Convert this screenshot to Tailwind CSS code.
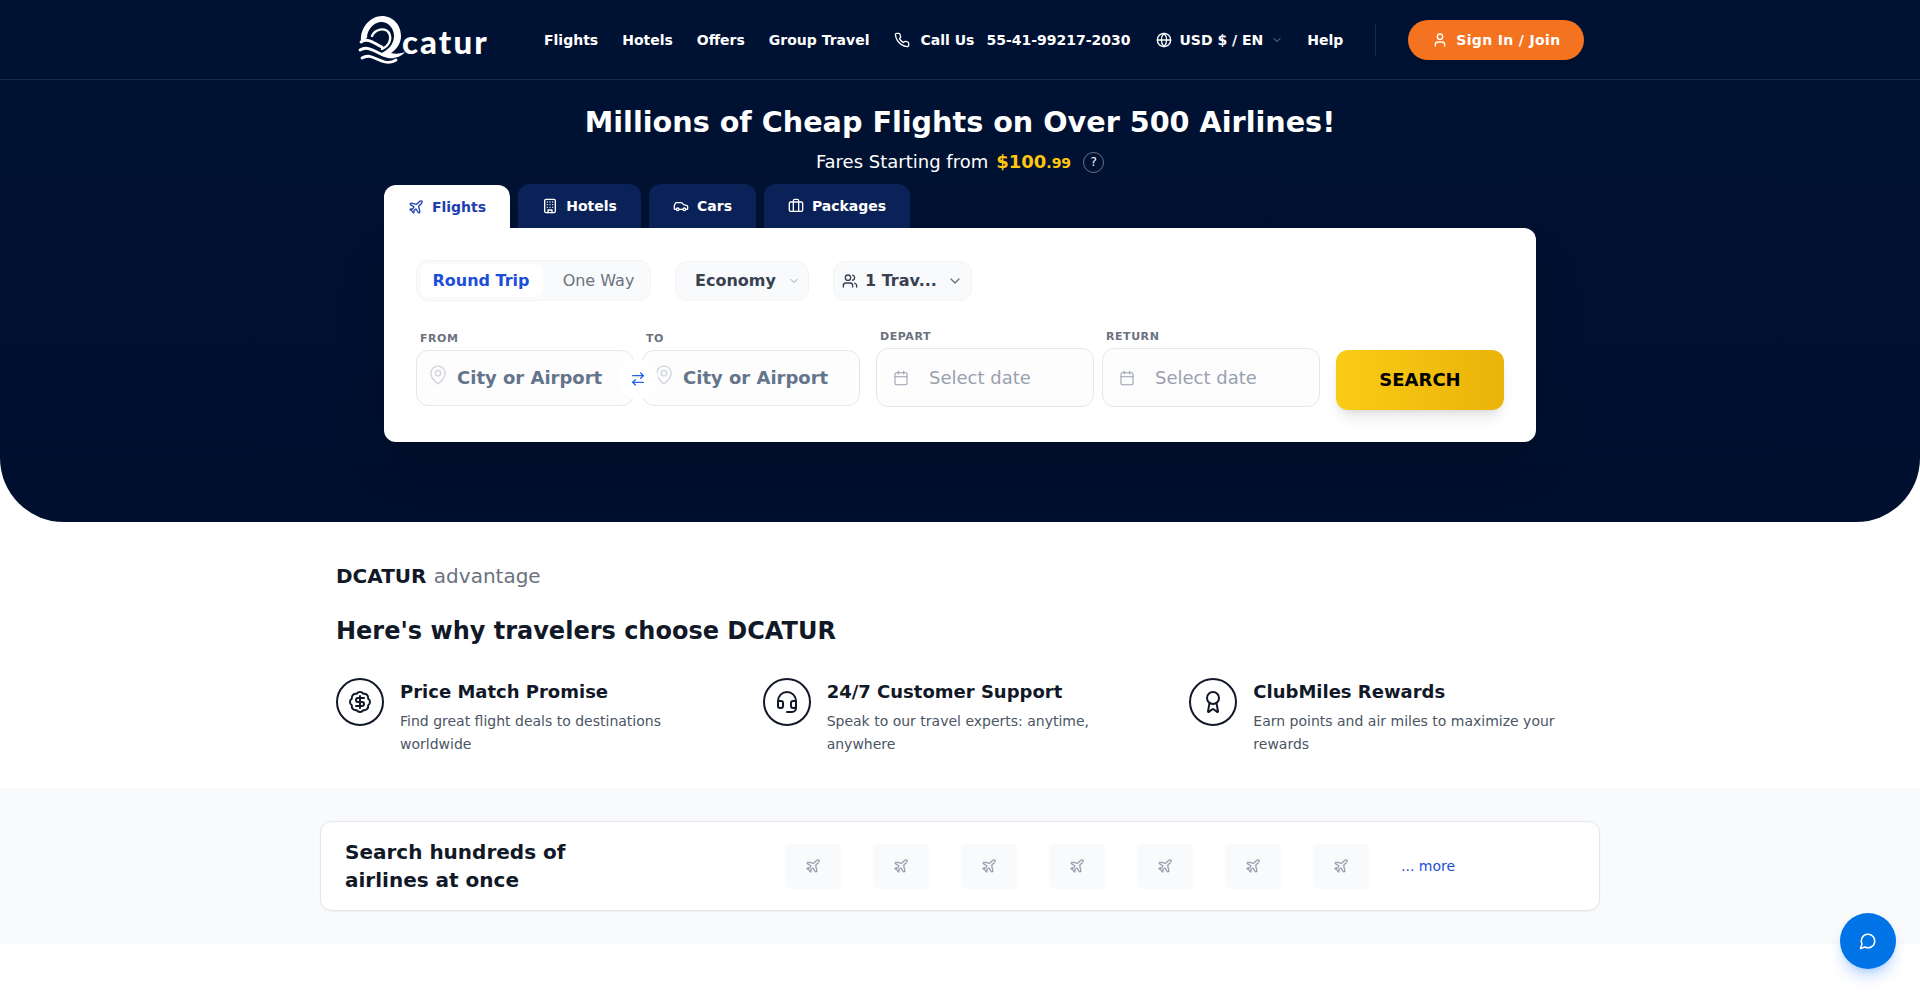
<!DOCTYPE html>
<html lang="en">
<head>
<meta charset="utf-8">
<title>DCATUR</title>
<script src="https://cdn.jsdelivr.net/npm/@tailwindcss/browser@4"></script>
</head>
<body class="bg-white font-['DejaVu_Sans',sans-serif] h-[993px] overflow-hidden">
<header class="h-20 bg-[#001233] border-b border-white/10 flex items-center">
  <div class="flex items-center w-[1280px] mx-auto pl-[38px]">
    <a class="flex items-center w-[186px] h-[50px] shrink-0">
      <svg class="w-[50px] h-[50px] shrink-0" viewBox="0 0 50 50" fill="none" stroke="#fff" stroke-linecap="round">
        <path fill="#fff" stroke="none" d="M3 26C2 12 13 1 24 1c11 0 19 9 19 20 0 7-4 13-10 17 4 1 9 1 14-1-4 5-11 7-17 6-4-1-6-2-9-4 9-3 15-10 15-18 0-9-7-15-14-14-7 1-13 8-13 16Z"/>
        <path d="M14 21c3-7 13-9 17-3 3 6 0 13-7 16" stroke-width="2.4"/>
        <path d="M3 27c7-5 14 2 21 5" stroke-width="2.8"/>
        <path d="M2 35c8-5 15 2 23 5" stroke-width="2.8"/>
        <path d="M4 43c8-5 14 2 23 4 4 1 8 0 11-2" stroke-width="2.8"/>
      </svg>
      <span class="font-['Lato',sans-serif] font-black text-[33px] leading-[40px] text-white tracking-[2.1px] -ml-[6px] mt-[3px]">catur</span>
    </a>
    <nav class="flex items-center text-white text-sm font-semibold">
      <a>Flights</a>
      <a class="ml-6">Hotels</a>
      <a class="ml-6">Offers</a>
      <a class="ml-6">Group Travel</a>
      <svg class="w-4 h-4 ml-6 mr-[11px]" viewBox="0 0 24 24" fill="none" stroke="currentColor" stroke-width="2" stroke-linecap="round" stroke-linejoin="round"><path d="M22 16.92v3a2 2 0 0 1-2.18 2 19.79 19.79 0 0 1-8.63-3.07 19.5 19.5 0 0 1-6-6 19.79 19.79 0 0 1-3.07-8.67A2 2 0 0 1 4.11 2h3a2 2 0 0 1 2 1.72 12.84 12.84 0 0 0 .7 2.81 2 2 0 0 1-.45 2.11L8.09 9.91a16 16 0 0 0 6 6l1.27-1.27a2 2 0 0 1 2.11-.45 12.84 12.84 0 0 0 2.81.7A2 2 0 0 1 22 16.92z"/></svg>
      <span>Call Us</span>
      <span class="ml-3">55-41-99217-2030</span>
      <svg class="w-4 h-4 ml-[26px] mr-[7px]" viewBox="0 0 24 24" fill="none" stroke="currentColor" stroke-width="2" stroke-linecap="round" stroke-linejoin="round"><circle cx="12" cy="12" r="10"/><path d="M12 2a14.5 14.5 0 0 0 0 20 14.5 14.5 0 0 0 0-20"/><path d="M2 12h20"/></svg>
      <span>USD $ / EN</span>
      <svg class="w-3 h-3 ml-2 text-white/50" viewBox="0 0 24 24" fill="none" stroke="currentColor" stroke-width="2" stroke-linecap="round" stroke-linejoin="round"><path d="m6 9 6 6 6-6"/></svg>
      <a class="ml-6">Help</a>
      <span class="w-px h-8 bg-white/10 ml-8"></span>
      <a class="ml-8 h-10 w-[176px] rounded-full bg-[#f47321] flex items-center justify-center gap-2 shadow-md tracking-[0.35px]">
        <svg class="w-4 h-4" viewBox="0 0 24 24" fill="none" stroke="currentColor" stroke-width="2" stroke-linecap="round" stroke-linejoin="round"><path d="M19 21v-2a4 4 0 0 0-4-4H9a4 4 0 0 0-4 4v2"/><circle cx="12" cy="7" r="4"/></svg>
        Sign In / Join
      </a>
    </nav>
  </div>
</header>

<section class="bg-[#001233] bg-gradient-to-b from-[#001233] to-[#000f2e] h-[442px] rounded-b-[64px] pt-6">
  <h1 class="text-[28.65px] leading-9 font-bold text-white text-center">Millions of Cheap Flights on Over 500 Airlines!</h1>
  <div class="mt-2 h-7 flex items-center justify-center text-white text-lg">
    <span>Fares Starting from</span>
    <span class="ml-2 font-bold text-[#fdc60f]">$100<span class="text-sm">.99</span></span>
    <span class="ml-3 w-[21px] h-[21px] rounded-full border border-white/40 text-xs flex items-center justify-center">?</span>
  </div>

  <div class="w-[1152px] mx-auto mt-2">
    <div class="flex gap-2 items-end h-[44px]">
      <a class="w-[126px] h-[43px] bg-white rounded-t-xl flex items-center justify-center gap-2 text-sm font-semibold text-[#1e40af]">
        <svg class="w-4 h-4" viewBox="0 0 24 24" fill="none" stroke="currentColor" stroke-width="2" stroke-linecap="round" stroke-linejoin="round"><path d="M17.8 19.2 16 11l3.5-3.5C21 6 21.5 4 21 3c-1-.5-3 0-4.5 1.5L13 8 4.8 6.2c-.5-.1-.9.1-1.1.5l-.3.5c-.2.5-.1 1 .3 1.3L9 12l-2 3H4l-1 1 3 2 2 3 1-1v-3l3-2 3.5 5.3c.3.4.8.5 1.3.3l.5-.2c.4-.3.6-.7.5-1.2z"/></svg>
        Flights
      </a>
      <a class="w-[123px] h-[44px] bg-[#0b2259] rounded-t-xl flex items-center justify-center gap-2 text-sm font-semibold text-white">
        <svg class="w-4 h-4" viewBox="0 0 24 24" fill="none" stroke="currentColor" stroke-width="2" stroke-linecap="round" stroke-linejoin="round"><rect width="16" height="20" x="4" y="2" rx="2"/><path d="M9 22v-4h6v4"/><path d="M8 6h.01"/><path d="M16 6h.01"/><path d="M12 6h.01"/><path d="M12 10h.01"/><path d="M12 14h.01"/><path d="M16 10h.01"/><path d="M16 14h.01"/><path d="M8 10h.01"/><path d="M8 14h.01"/></svg>
        Hotels
      </a>
      <a class="w-[107px] h-[44px] bg-[#0b2259] rounded-t-xl flex items-center justify-center gap-2 text-sm font-semibold text-white">
        <svg class="w-4 h-4" viewBox="0 0 24 24" fill="none" stroke="currentColor" stroke-width="2" stroke-linecap="round" stroke-linejoin="round"><path d="M19 17h2c.6 0 1-.4 1-1v-3c0-.9-.7-1.7-1.5-1.9C18.7 10.6 16 10 16 10s-1.3-1.4-2.2-2.3c-.5-.4-1.1-.7-1.8-.7H5c-.6 0-1.1.4-1.4.9l-1.4 2.9A3.7 3.7 0 0 0 2 12v4c0 .6.4 1 1 1h2"/><circle cx="7" cy="17" r="2"/><path d="M9 17h6"/><circle cx="17" cy="17" r="2"/></svg>
        Cars
      </a>
      <a class="w-[146px] h-[44px] bg-[#0b2259] rounded-t-xl flex items-center justify-center gap-2 text-sm font-semibold text-white">
        <svg class="w-4 h-4" viewBox="0 0 24 24" fill="none" stroke="currentColor" stroke-width="2" stroke-linecap="round" stroke-linejoin="round"><path d="M16 20V4a2 2 0 0 0-2-2h-4a2 2 0 0 0-2 2v16"/><rect width="20" height="14" x="2" y="6" rx="2"/></svg>
        Packages
      </a>
    </div>

    <div class="bg-white h-[214px] rounded-b-xl rounded-tr-xl px-8 pt-8 shadow-2xl">
      <div class="flex items-center h-[41px]">
        <div class="w-[235px] h-[41px] bg-[#f8fafc] border border-gray-100 rounded-xl flex items-center p-1">
          <span class="w-[122px] h-[33px] pr-[2px] rounded-lg bg-white flex items-center justify-center text-base font-semibold text-[#1d4ed8]">Round Trip</span>
          <span class="flex-1 pl-[8px] text-center text-base text-[#6b7280]">One Way</span>
        </div>
        <div class="ml-6 w-[134px] h-[40px] bg-[#f8fafc] border border-gray-100 rounded-xl flex items-center pl-[19px] pr-2 justify-between">
          <span class="text-base font-semibold text-[#374151]">Economy</span>
          <svg class="w-3 h-3 text-gray-400" viewBox="0 0 24 24" fill="none" stroke="currentColor" stroke-width="2" stroke-linecap="round" stroke-linejoin="round"><path d="m6 9 6 6 6-6"/></svg>
        </div>
        <div class="ml-6 w-[139px] h-[40px] bg-[#f8fafc] border border-gray-100 rounded-xl flex items-center pl-2 pr-2">
          <svg class="w-4 h-4 text-[#374151]" viewBox="0 0 24 24" fill="none" stroke="currentColor" stroke-width="2" stroke-linecap="round" stroke-linejoin="round"><path d="M16 21v-2a4 4 0 0 0-4-4H6a4 4 0 0 0-4 4v2"/><circle cx="9" cy="7" r="4"/><path d="M22 21v-2a4 4 0 0 0-3-3.87"/><path d="M16 3.13a4 4 0 0 1 0 7.75"/></svg>
          <span class="ml-[7px] text-base font-semibold text-[#374151] flex-1">1 Trav...</span>
          <svg class="w-4 h-4 text-gray-500" viewBox="0 0 24 24" fill="none" stroke="currentColor" stroke-width="2" stroke-linecap="round" stroke-linejoin="round"><path d="m6 9 6 6 6-6"/></svg>
        </div>
      </div>

      <div class="flex items-start mt-[29px] relative">
        <div class="w-[218px] mt-px">
          <div class="pl-1 h-[16px] mb-[3px] text-[11px] leading-4 font-semibold tracking-[0.55px] text-[#6b7280] uppercase">From</div>
          <div class="h-[56px] border border-gray-200 rounded-xl bg-[#fdfdfe] pl-[13px] flex items-center gap-[11px]">
            <svg class="w-4 h-[20px] text-gray-300 -mt-[6px] shrink-0" viewBox="3 1 18 22" fill="none" stroke="currentColor" stroke-width="1.6" stroke-linecap="round" stroke-linejoin="round"><path d="M20 10c0 6-8 12-8 12s-8-6-8-12a8 8 0 0 1 16 0Z"/><circle cx="12" cy="10" r="3"/></svg>
            <span class="text-lg font-semibold text-[#64748b] whitespace-nowrap">City or Airport</span>
          </div>
        </div>
        <div class="w-[218px] ml-2 mt-px">
          <div class="pl-1 h-[16px] mb-[3px] text-[11px] leading-4 font-semibold tracking-[0.55px] text-[#6b7280] uppercase">To</div>
          <div class="h-[56px] border border-gray-200 rounded-xl bg-[#fdfdfe] pl-[13px] flex items-center gap-[11px]">
            <svg class="w-4 h-[20px] text-gray-300 -mt-[6px] shrink-0" viewBox="3 1 18 22" fill="none" stroke="currentColor" stroke-width="1.6" stroke-linecap="round" stroke-linejoin="round"><path d="M20 10c0 6-8 12-8 12s-8-6-8-12a8 8 0 0 1 16 0Z"/><circle cx="12" cy="10" r="3"/></svg>
            <span class="text-lg font-semibold text-[#64748b] whitespace-nowrap">City or Airport</span>
          </div>
        </div>
        <div class="absolute left-[202px] top-[29px] w-[40px] h-[40px] rounded-full bg-white flex items-center justify-center">
          <svg class="w-4 h-4 text-[#2563eb]" viewBox="0 0 24 24" fill="none" stroke="currentColor" stroke-width="2" stroke-linecap="round" stroke-linejoin="round"><path d="m16 3 4 4-4 4"/><path d="M20 7H4"/><path d="m8 21-4-4 4-4"/><path d="M4 17h16"/></svg>
        </div>
        <div class="w-[218px] ml-4 -mt-px">
          <div class="pl-1 h-[16px] mb-[3px] text-[11px] leading-4 font-semibold tracking-[0.55px] text-[#6b7280] uppercase">Depart</div>
          <div class="h-[59px] border border-gray-200 rounded-xl bg-[#fdfdfe] pl-4 flex items-center gap-4">
            <svg class="w-4 h-4 text-gray-400 shrink-0" viewBox="0 0 24 24" fill="none" stroke="currentColor" stroke-width="1.6" stroke-linecap="round" stroke-linejoin="round"><path d="M8 2v4"/><path d="M16 2v4"/><rect width="18" height="18" x="3" y="4" rx="2"/><path d="M3 10h18"/></svg>
            <span class="ml-1 text-lg text-gray-400">Select date</span>
          </div>
        </div>
        <div class="w-[218px] ml-2 -mt-px">
          <div class="pl-1 h-[16px] mb-[3px] text-[11px] leading-4 font-semibold tracking-[0.55px] text-[#6b7280] uppercase">Return</div>
          <div class="h-[59px] border border-gray-200 rounded-xl bg-[#fdfdfe] pl-4 flex items-center gap-4">
            <svg class="w-4 h-4 text-gray-400 shrink-0" viewBox="0 0 24 24" fill="none" stroke="currentColor" stroke-width="1.6" stroke-linecap="round" stroke-linejoin="round"><path d="M8 2v4"/><path d="M16 2v4"/><rect width="18" height="18" x="3" y="4" rx="2"/><path d="M3 10h18"/></svg>
            <span class="ml-1 text-lg text-gray-400">Select date</span>
          </div>
        </div>
        <button class="ml-4 mt-[20px] w-[168px] h-[60px] rounded-xl bg-gradient-to-r from-[#facc15] to-[#eab308] text-lg font-bold text-black shadow-lg">SEARCH</button>
      </div>
    </div>
  </div>
</section>

<section class="w-[1280px] mx-auto pt-10 h-[266px]">
  <p class="px-4 text-xl leading-7 text-[#6b7280]"><b class="text-[#111827] font-bold mr-px">DCATUR</b> advantage</p>
  <h2 class="px-4 mt-[25px] text-2xl font-bold leading-8 text-[#111827]">Here's why travelers choose DCATUR</h2>
  <div class="grid grid-cols-3 mt-[31px]">
    <div class="px-4 flex gap-4">
      <div class="w-12 h-12 rounded-full border-2 border-[#111827] flex items-center justify-center shrink-0 text-[#111827]">
        <svg class="w-6 h-6" viewBox="0 0 24 24" fill="none" stroke="currentColor" stroke-width="2" stroke-linecap="round" stroke-linejoin="round"><path d="M3.85 8.62a4 4 0 0 1 4.78-4.77 4 4 0 0 1 6.74 0 4 4 0 0 1 4.78 4.78 4 4 0 0 1 0 6.74 4 4 0 0 1-4.77 4.78 4 4 0 0 1-6.75 0 4 4 0 0 1-4.78-4.77 4 4 0 0 1 0-6.76Z"/><path d="M16 8h-6a2 2 0 1 0 0 4h4a2 2 0 1 1 0 4H8"/><path d="M12 18V6"/></svg>
      </div>
      <div>
        <h3 class="text-lg leading-7 font-semibold text-[#111827]">Price Match Promise</h3>
        <p class="mt-1 text-sm leading-[23px] text-[#4b5563]">Find great flight deals to destinations worldwide</p>
      </div>
    </div>
    <div class="px-4 flex gap-4">
      <div class="w-12 h-12 rounded-full border-2 border-[#111827] flex items-center justify-center shrink-0 text-[#111827]">
        <svg class="w-6 h-6" viewBox="0 0 24 24" fill="none" stroke="currentColor" stroke-width="2" stroke-linecap="round" stroke-linejoin="round"><path d="M3 11h3a2 2 0 0 1 2 2v3a2 2 0 0 1-2 2H5a2 2 0 0 1-2-2v-5Zm0 0a9 9 0 1 1 18 0m0 0v5a2 2 0 0 1-2 2h-1a2 2 0 0 1-2-2v-3a2 2 0 0 1 2-2h3Z"/><path d="M21 16v2a4 4 0 0 1-4 4h-5"/></svg>
      </div>
      <div>
        <h3 class="text-lg leading-7 font-semibold text-[#111827]">24/7 Customer Support</h3>
        <p class="mt-1 text-sm leading-[23px] text-[#4b5563]">Speak to our travel experts: anytime, anywhere</p>
      </div>
    </div>
    <div class="px-4 flex gap-4">
      <div class="w-12 h-12 rounded-full border-2 border-[#111827] flex items-center justify-center shrink-0 text-[#111827]">
        <svg class="w-6 h-6" viewBox="0 0 24 24" fill="none" stroke="currentColor" stroke-width="2" stroke-linecap="round" stroke-linejoin="round"><path d="m15.477 12.89 1.515 8.526a.5.5 0 0 1-.81.47l-3.58-2.687a1 1 0 0 0-1.197 0l-3.586 2.686a.5.5 0 0 1-.81-.469l1.514-8.526"/><circle cx="12" cy="8" r="6"/></svg>
      </div>
      <div>
        <h3 class="text-lg leading-7 font-semibold text-[#111827]">ClubMiles Rewards</h3>
        <p class="mt-1 text-sm leading-[23px] text-[#4b5563]">Earn points and air miles to maximize your rewards</p>
      </div>
    </div>
  </div>
</section>

<section class="bg-[#f9fafb] h-[156px] pt-[33px]">
  <div class="w-[1280px] h-[90px] mx-auto bg-white border border-[#e5e7eb] rounded-xl shadow-xs flex items-center pl-6">
    <h2 class="w-[440px] shrink-0 text-xl leading-7 font-semibold text-[#111827]"><span class="block">Search hundreds of</span><span class="block">airlines at once</span></h2>
    <div class="flex items-center gap-8">
      <div class="w-14 h-[45px] rounded bg-[#f9fafb] flex items-center justify-center text-gray-400"><svg class="w-4 h-4" viewBox="0 0 24 24" fill="none" stroke="currentColor" stroke-width="2" stroke-linecap="round" stroke-linejoin="round"><path d="M17.8 19.2 16 11l3.5-3.5C21 6 21.5 4 21 3c-1-.5-3 0-4.5 1.5L13 8 4.8 6.2c-.5-.1-.9.1-1.1.5l-.3.5c-.2.5-.1 1 .3 1.3L9 12l-2 3H4l-1 1 3 2 2 3 1-1v-3l3-2 3.5 5.3c.3.4.8.5 1.3.3l.5-.2c.4-.3.6-.7.5-1.2z"/></svg></div>
      <div class="w-14 h-[45px] rounded bg-[#f9fafb] flex items-center justify-center text-gray-400"><svg class="w-4 h-4" viewBox="0 0 24 24" fill="none" stroke="currentColor" stroke-width="2" stroke-linecap="round" stroke-linejoin="round"><path d="M17.8 19.2 16 11l3.5-3.5C21 6 21.5 4 21 3c-1-.5-3 0-4.5 1.5L13 8 4.8 6.2c-.5-.1-.9.1-1.1.5l-.3.5c-.2.5-.1 1 .3 1.3L9 12l-2 3H4l-1 1 3 2 2 3 1-1v-3l3-2 3.5 5.3c.3.4.8.5 1.3.3l.5-.2c.4-.3.6-.7.5-1.2z"/></svg></div>
      <div class="w-14 h-[45px] rounded bg-[#f9fafb] flex items-center justify-center text-gray-400"><svg class="w-4 h-4" viewBox="0 0 24 24" fill="none" stroke="currentColor" stroke-width="2" stroke-linecap="round" stroke-linejoin="round"><path d="M17.8 19.2 16 11l3.5-3.5C21 6 21.5 4 21 3c-1-.5-3 0-4.5 1.5L13 8 4.8 6.2c-.5-.1-.9.1-1.1.5l-.3.5c-.2.5-.1 1 .3 1.3L9 12l-2 3H4l-1 1 3 2 2 3 1-1v-3l3-2 3.5 5.3c.3.4.8.5 1.3.3l.5-.2c.4-.3.6-.7.5-1.2z"/></svg></div>
      <div class="w-14 h-[45px] rounded bg-[#f9fafb] flex items-center justify-center text-gray-400"><svg class="w-4 h-4" viewBox="0 0 24 24" fill="none" stroke="currentColor" stroke-width="2" stroke-linecap="round" stroke-linejoin="round"><path d="M17.8 19.2 16 11l3.5-3.5C21 6 21.5 4 21 3c-1-.5-3 0-4.5 1.5L13 8 4.8 6.2c-.5-.1-.9.1-1.1.5l-.3.5c-.2.5-.1 1 .3 1.3L9 12l-2 3H4l-1 1 3 2 2 3 1-1v-3l3-2 3.5 5.3c.3.4.8.5 1.3.3l.5-.2c.4-.3.6-.7.5-1.2z"/></svg></div>
      <div class="w-14 h-[45px] rounded bg-[#f9fafb] flex items-center justify-center text-gray-400"><svg class="w-4 h-4" viewBox="0 0 24 24" fill="none" stroke="currentColor" stroke-width="2" stroke-linecap="round" stroke-linejoin="round"><path d="M17.8 19.2 16 11l3.5-3.5C21 6 21.5 4 21 3c-1-.5-3 0-4.5 1.5L13 8 4.8 6.2c-.5-.1-.9.1-1.1.5l-.3.5c-.2.5-.1 1 .3 1.3L9 12l-2 3H4l-1 1 3 2 2 3 1-1v-3l3-2 3.5 5.3c.3.4.8.5 1.3.3l.5-.2c.4-.3.6-.7.5-1.2z"/></svg></div>
      <div class="w-14 h-[45px] rounded bg-[#f9fafb] flex items-center justify-center text-gray-400"><svg class="w-4 h-4" viewBox="0 0 24 24" fill="none" stroke="currentColor" stroke-width="2" stroke-linecap="round" stroke-linejoin="round"><path d="M17.8 19.2 16 11l3.5-3.5C21 6 21.5 4 21 3c-1-.5-3 0-4.5 1.5L13 8 4.8 6.2c-.5-.1-.9.1-1.1.5l-.3.5c-.2.5-.1 1 .3 1.3L9 12l-2 3H4l-1 1 3 2 2 3 1-1v-3l3-2 3.5 5.3c.3.4.8.5 1.3.3l.5-.2c.4-.3.6-.7.5-1.2z"/></svg></div>
      <div class="w-14 h-[45px] rounded bg-[#f9fafb] flex items-center justify-center text-gray-400"><svg class="w-4 h-4" viewBox="0 0 24 24" fill="none" stroke="currentColor" stroke-width="2" stroke-linecap="round" stroke-linejoin="round"><path d="M17.8 19.2 16 11l3.5-3.5C21 6 21.5 4 21 3c-1-.5-3 0-4.5 1.5L13 8 4.8 6.2c-.5-.1-.9.1-1.1.5l-.3.5c-.2.5-.1 1 .3 1.3L9 12l-2 3H4l-1 1 3 2 2 3 1-1v-3l3-2 3.5 5.3c.3.4.8.5 1.3.3l.5-.2c.4-.3.6-.7.5-1.2z"/></svg></div>
      <a class="text-sm text-[#1d4ed8]">... more</a>
    </div>
  </div>
</section>

<a class="fixed right-6 bottom-6 w-14 h-14 rounded-full bg-[#0073e6] shadow-lg shadow-blue-500/30 flex items-center justify-center text-white">
  <svg class="w-[18px] h-[18px]" viewBox="0 0 24 24" fill="none" stroke="currentColor" stroke-width="2" stroke-linecap="round" stroke-linejoin="round"><path d="M7.9 20A9 9 0 1 0 4 16.1L2 22Z"/></svg>
</a>
</body>
</html>
